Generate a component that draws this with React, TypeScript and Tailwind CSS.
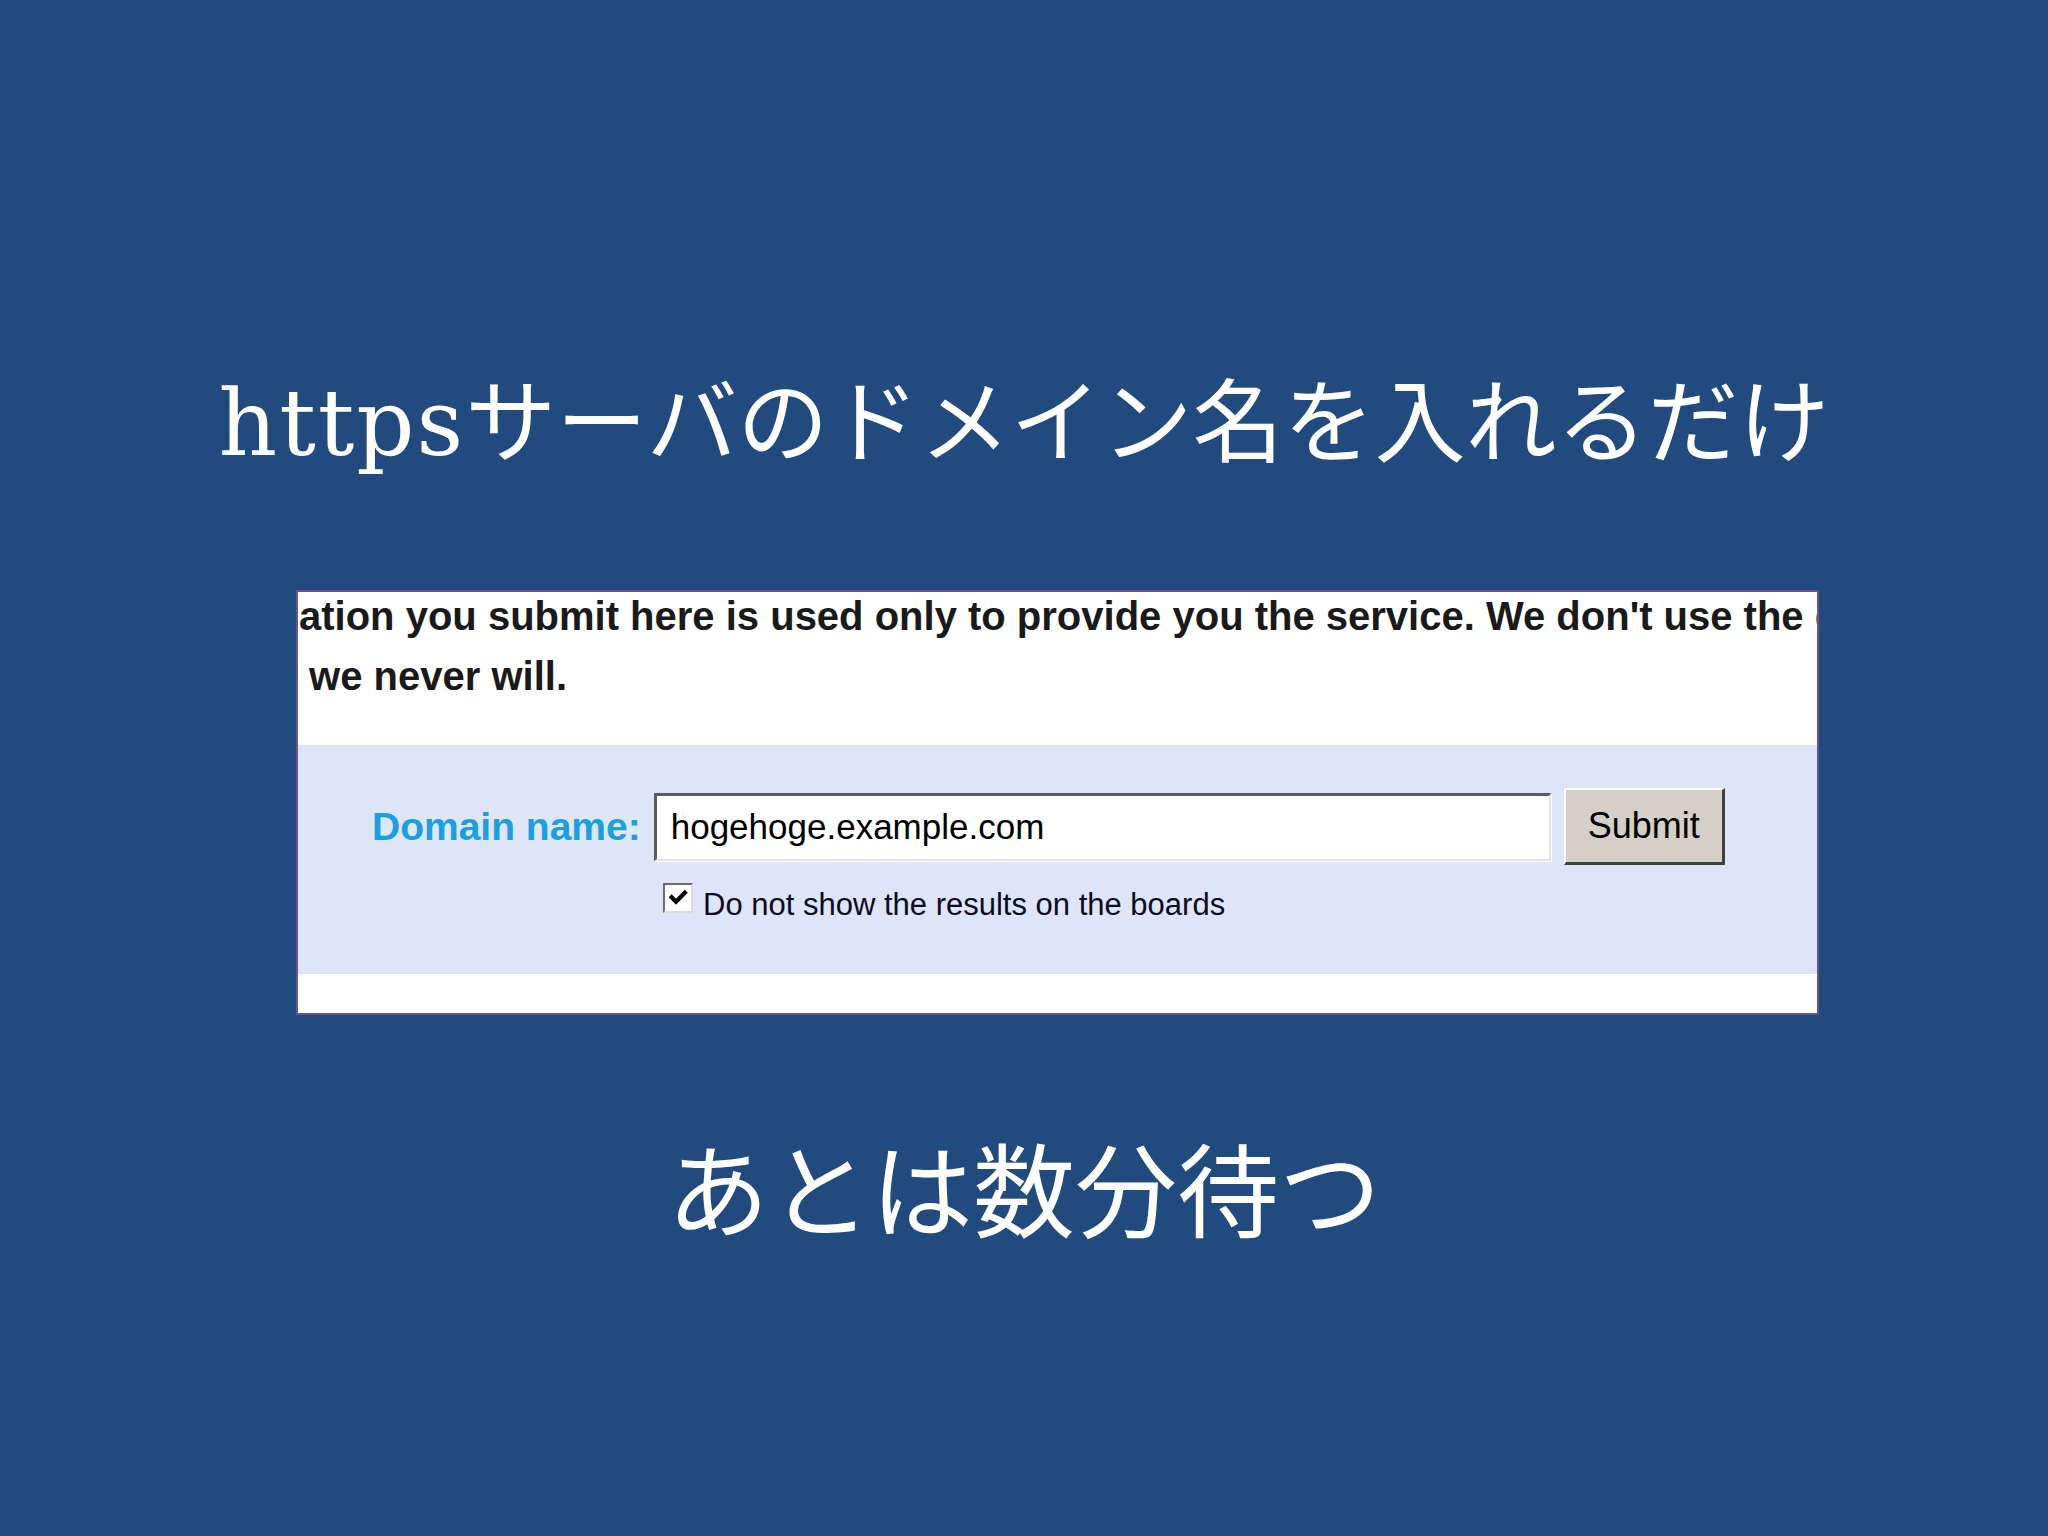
export default function App() {
  return (
    <div className="w-[2048px] h-[1536px] bg-[#214a7f] flex flex-col overflow-hidden">
      {/* Title */}
      <h1 className="pt-[378px] text-center text-white text-[91px] leading-none whitespace-nowrap font-['DejaVu_Serif','Noto_Sans_CJK_JP',serif]">
        <span className="tracking-[2px]">https</span>サーバのドメイン名を入れるだけ
      </h1>

      {/* Screenshot of the form */}
      <div className="ml-[296px] mt-[121px] w-[1523px] h-[425px] border-2 border-[#65558f] bg-white flex flex-col overflow-hidden font-['Liberation_Sans',Arial,sans-serif]">
        <div className="h-[153px] overflow-hidden whitespace-nowrap text-[40px] font-bold text-[#1a1a1a]">
          <div className="pl-[1px] leading-[48px]">
            ation you submit here is used only to provide you the service. We don't use the data
          </div>
          <div className="mt-[12px] leading-[48px] whitespace-pre"> we never will.</div>
        </div>

        <div className="h-[229px] bg-[#dde5f7] pt-[43px] pl-[74px]">
          <div className="flex items-center h-[77px]">
            <span className="text-[39px] font-bold leading-none text-[#1a9fe0] whitespace-nowrap">Domain name:</span>
            <input
              readOnly
              value="hogehoge.example.com"
              className="ml-[13px] w-[897px] h-[68px] bg-white pl-[14px] text-[35px] text-black outline-none border-t-[3px] border-l-[3px] border-b-2 border-r-2 border-t-[#5c5c5c] border-l-[#5c5c5c] border-b-[#e2e2e2] border-r-[#e2e2e2] shadow-[1px_1px_0_#ffffff]"
            />
            <button className="ml-[13px] w-[161px] h-[77px] bg-[#d4d0c8] text-[36px] leading-none text-black border-t-2 border-l-2 border-b-[3px] border-r-[3px] border-t-white border-l-white border-b-[#404040] border-r-[#404040]">
              Submit
            </button>
          </div>
          <div className="flex items-start mt-[18px] ml-[291px]">
            <span className="w-[30px] h-[30px] bg-white flex items-center justify-center border-t-2 border-l-2 border-b-2 border-r-2 border-t-[#6b6b6b] border-l-[#6b6b6b] border-b-[#dcdcdc] border-r-[#dcdcdc]">
              <svg viewBox="0 0 10 10" className="w-[20px] h-[20px]">
                <path d="M1.8 4.6 L4 6.9 L8.4 2.4" fill="none" stroke="#000" strokeWidth="2.1" strokeLinecap="square" />
              </svg>
            </span>
            <span className="ml-[10px] mt-[6px] text-[31px] leading-[31px] text-[#0c0c22] whitespace-nowrap">
              Do not show the results on the boards
            </span>
          </div>
        </div>

        <div className="flex-1 bg-white" />
      </div>

      {/* Footer line */}
      <p className="mt-[120px] text-center text-white text-[102px] leading-none whitespace-nowrap font-['Noto_Sans_CJK_JP',sans-serif]">
        あとは数分待つ
      </p>
    </div>
  )
}
